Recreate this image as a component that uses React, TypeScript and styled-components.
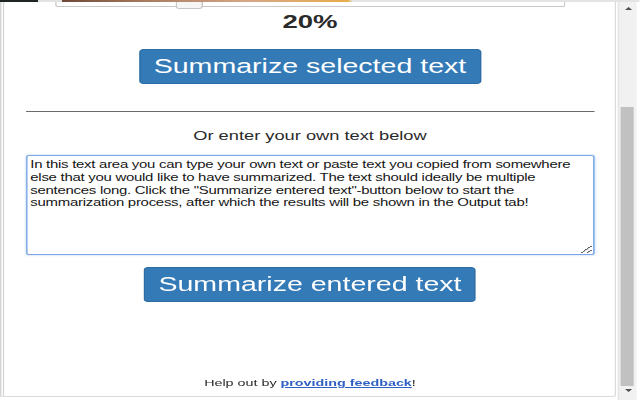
import React from 'react';
import styled, { createGlobalStyle } from 'styled-components';

// The reference is a popup capture that was stretched sideways to 640px,
// so the page is laid out at its own width and widened by STRETCH.
const STRETCH = 1.45;
const PAGE_WIDTH = 640 / STRETCH;

const FONT = `"Liberation Sans", Arial, sans-serif`;

const GlobalStyle = createGlobalStyle`
  *, *::before, *::after {
    box-sizing: border-box;
  }

  html, body {
    margin: 0;
    padding: 0;
    background: #fff;
  }

  body {
    font-family: ${FONT};
    color: #333;
  }
`;

const StageEl = styled.div`
  width: 640px;
  height: 400px;
  overflow: hidden;
  background: #fff;
`;

const PageEl = styled.div`
  width: ${PAGE_WIDTH}px;
  height: 400px;
  display: flex;
  flex-direction: column;
  transform: scaleX(${STRETCH});
  transform-origin: 0 0;
`;

// bottom edge of the picture that sits above the scrolled-off part of the popup
const TopStripEl = styled.div`
  flex: none;
  height: 2px;
  background: linear-gradient(
    to right,
    #1e2524 0,
    #1e2524 26px,
    #e2e2e2 26px,
    #e2e2e2 43px,
    #6e4a38 43px,
    #a87a5e 100px,
    #d6a688 170px,
    #e9ad4c 240px,
    #e4e4e4 243px,
    #e4e4e4 100%
  );
`;

const BodyEl = styled.div`
  flex: 1;
  min-height: 0;
  display: flex;
`;

const PanelEl = styled.main`
  flex: 1;
  min-width: 0;
  display: flex;
  flex-direction: column;
  align-items: center;
  margin: 0 0.9px 3px 0.4px;
  border-left: 3px double #d4d4d4;
  border-right: 1px solid #dadada;
  border-bottom: 1px solid #dadada;
  border-bottom-right-radius: 3px;
  background: #fff;
  overflow: hidden;
`;

const SliderTrackEl = styled.div`
  position: relative;
  flex: none;
  width: 352px;
  height: 5px;
  border: 1px solid #c9c9c9;
  border-top: 0;
  border-radius: 0 0 2px 2px;
  background: #fff;
`;

const SliderHandleEl = styled.span<{ $left: number }>`
  position: absolute;
  top: 0;
  left: ${(p) => p.$left}px;
  width: 18.6px;
  height: 7px;
  border: 1px solid #c5c5c5;
  border-top: 0;
  border-radius: 0 0 3px 3px;
  background: #f6f6f6;
`;

const PercentEl = styled.div`
  margin-top: 4px;
  font-size: 19px;
  font-weight: 700;
  line-height: 22px;
  color: #2a2a2a;
`;

const PrimaryButtonEl = styled.button<{ $gap: number }>`
  flex: none;
  margin-top: ${(p) => p.$gap}px;
  height: 35px;
  padding: 0 9px;
  border: 1px solid #2e6da4;
  border-radius: 3px;
  background: #337ab7;
  color: #fff;
  font-family: ${FONT};
  font-size: 19.7px;
  line-height: 33px;
  white-space: nowrap;
  cursor: pointer;
`;

const DividerEl = styled.hr`
  align-self: stretch;
  flex: none;
  height: 1px;
  margin: 27px 14px 0 15px;
  border: 0;
  background: #6a6a6a;
`;

const PromptEl = styled.p`
  margin: 17px 0 0;
  font-size: 12.6px;
  line-height: 15px;
  color: #2a2a2a;
`;

const TextInputEl = styled.textarea`
  align-self: stretch;
  flex: none;
  height: 100px;
  margin: 11px 14px 0 14.5px;
  padding: 3px 2px 1px;
  border: 1px solid #7ea9e6;
  border-radius: 2px;
  box-shadow: 0 0 2px rgba(102, 160, 233, 0.55);
  outline: none;
  font-family: ${FONT};
  font-size: 10.3px;
  letter-spacing: -0.18px;
  line-height: 12.8px;
  color: #161616;
  resize: vertical;
`;

const FooterEl = styled.p`
  margin: auto 0 0;
  padding-bottom: 7px;
  font-size: 9.9px;
  line-height: 12px;
  color: #2a2a2a;
`;

const FeedbackLinkEl = styled.a`
  font-weight: 700;
  color: #2f5fc4;
  text-decoration: underline;
`;

const ScrollBarEl = styled.div`
  flex: none;
  width: 13.3px;
  margin-right: 2px;
  display: flex;
  flex-direction: column;
  background: #f1f1f1;
  border-left: 1px solid #e4e4e4;
`;

const ScrollArrowEl = styled.div<{ $height: number; $pad: number }>`
  flex: none;
  height: ${(p) => p.$height}px;
  padding-top: ${(p) => p.$pad}px;
  display: flex;
  justify-content: center;
  align-items: flex-start;

  svg {
    display: block;
  }
`;

const ScrollTrackEl = styled.div<{ $offset: number }>`
  flex: 1;
  display: flex;
  flex-direction: column;
  padding-top: ${(p) => p.$offset}px;
`;

const ScrollThumbEl = styled.div`
  flex: 1;
  margin: 0 2px 0 1.3px;
  background: #c1c1c1;
`;

const ArrowGlyph = ({ down }: { down?: boolean }) => (
  <svg width="5" height="3" viewBox="0 0 5 3">
    <path d={down ? 'M0 0 L5 0 L2.5 3 Z' : 'M0 3 L2.5 0 L5 3 Z'} fill="#505050" />
  </svg>
);

const SAMPLE_TEXT =
  'In this text area you can type your own text or paste text you copied from somewhere else that you would like to have summarized. The text should ideally be multiple sentences long. Click the "Summarize entered text"-button below to start the summarization process, after which the results will be shown in the Output tab!';

class App extends React.Component {
  render() {
    return (
      <StageEl>
        <GlobalStyle />
        <PageEl>
          <TopStripEl />

          <BodyEl>
            <PanelEl>
              <SliderTrackEl>
                <SliderHandleEl $left={82.4} />
              </SliderTrackEl>

              <PercentEl>20%</PercentEl>

              <PrimaryButtonEl $gap={16}>Summarize selected text</PrimaryButtonEl>

              <DividerEl />

              <PromptEl>Or enter your own text below</PromptEl>

              <TextInputEl defaultValue={SAMPLE_TEXT} />

              <PrimaryButtonEl $gap={12}>Summarize entered text</PrimaryButtonEl>

              <FooterEl>
                Help out by <FeedbackLinkEl href="#">providing feedback</FeedbackLinkEl>!
              </FooterEl>
            </PanelEl>

            <ScrollBarEl>
              <ScrollArrowEl $height={15} $pad={4.5}>
                <ArrowGlyph />
              </ScrollArrowEl>
              <ScrollTrackEl $offset={90}>
                <ScrollThumbEl />
              </ScrollTrackEl>
              <ScrollArrowEl $height={14} $pad={3}>
                <ArrowGlyph down />
              </ScrollArrowEl>
            </ScrollBarEl>
          </BodyEl>
        </PageEl>
      </StageEl>
    );
  }
}

export default App;
